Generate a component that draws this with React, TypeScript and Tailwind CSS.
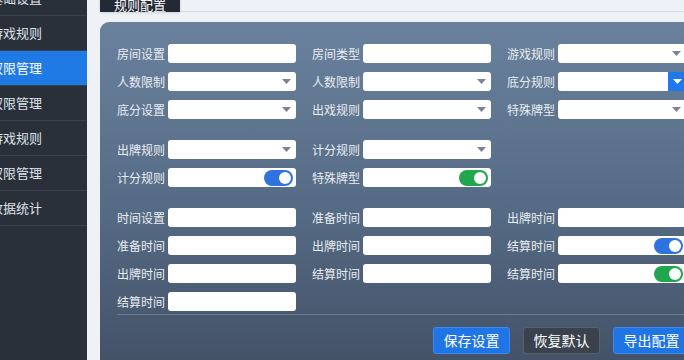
import React from 'react';

type Kind = 'text' | 'select' | 'selectBtn' | 'toggleBlue' | 'toggleGreen' | 'none';
type Field = { label: string; kind: Kind };

const SIDEBAR = ['基础设置', '游戏规则', '权限管理', '权限管理', '游戏规则', '权限管理', '数据统计'];

const SECTIONS: Field[][][] = [
  [
    [
      { label: '房间设置', kind: 'text' },
      { label: '房间类型', kind: 'text' },
      { label: '游戏规则', kind: 'select' },
    ],
    [
      { label: '人数限制', kind: 'select' },
      { label: '人数限制', kind: 'select' },
      { label: '底分规则', kind: 'selectBtn' },
    ],
    [
      { label: '底分设置', kind: 'select' },
      { label: '出戏规则', kind: 'select' },
      { label: '特殊牌型', kind: 'select' },
    ],
  ],
  [
    [
      { label: '出牌规则', kind: 'select' },
      { label: '计分规则', kind: 'select' },
      { label: '', kind: 'none' },
    ],
    [
      { label: '计分规则', kind: 'toggleBlue' },
      { label: '特殊牌型', kind: 'toggleGreen' },
      { label: '', kind: 'none' },
    ],
  ],
  [
    [
      { label: '时间设置', kind: 'text' },
      { label: '准备时间', kind: 'text' },
      { label: '出牌时间', kind: 'text' },
    ],
    [
      { label: '准备时间', kind: 'text' },
      { label: '出牌时间', kind: 'text' },
      { label: '结算时间', kind: 'toggleBlue' },
    ],
    [
      { label: '出牌时间', kind: 'text' },
      { label: '结算时间', kind: 'text' },
      { label: '结算时间', kind: 'toggleGreen' },
    ],
    [
      { label: '结算时间', kind: 'text' },
      { label: '', kind: 'none' },
      { label: '', kind: 'none' },
    ],
  ],
];

function Caret({ className }: { className: string }) {
  return (
    <svg width="9" height="5" viewBox="0 0 9 5" className={className}>
      <path d="M0 0h9L4.5 5z" fill="currentColor" />
    </svg>
  );
}

function Control({ kind }: { kind: Kind }) {
  // Toggle inside a white box
  if (kind === 'toggleBlue' || kind === 'toggleGreen') {
    const bg = kind === 'toggleBlue' ? 'bg-[#2f73df]' : 'bg-[#20a64c]';
    return (
      <div className="w-[128px] h-[19px] bg-white rounded-[3px] flex items-center justify-end pr-[3px]">
        <div className={`w-[29px] h-[16px] rounded-full ${bg} flex items-center justify-end pr-[2px]`}>
          <div className="w-[12px] h-[12px] rounded-full bg-white" />
        </div>
      </div>
    );
  }
  if (kind === 'select') {
    return (
      <div className="w-[128px] h-[19px] bg-white rounded-[3px] flex items-center justify-end pr-[5px]">
        <Caret className="text-[#7b8490]" />
      </div>
    );
  }
  if (kind === 'selectBtn') {
    return (
      <div className="w-[128px] h-[19px] bg-white rounded-[3px] flex justify-end overflow-hidden">
        <div className="w-[18px] h-full bg-[#1f78ee] flex items-center justify-center">
          <Caret className="text-white" />
        </div>
      </div>
    );
  }
  return <div className="w-[128px] h-[19px] bg-white rounded-[3px]" />;
}

export default function App() {
  return (
    <div
      className="w-[684px] h-[360px] overflow-hidden flex bg-[#eef1f5]"
      style={{ fontFamily: '"Noto Sans CJK SC", "Noto Sans", sans-serif' }}
    >
      {/* sidebar */}
      <aside className="w-[87px] shrink-0 bg-[#29303a] overflow-hidden">
        <div className="-mt-[19px]">
          {SIDEBAR.map((item, i) => (
            <div
              key={i}
              className={`h-[35px] flex items-center border-b border-[#3a424e] text-[13px] whitespace-nowrap ${
                i === 2 ? 'bg-[#1f7ae6] text-white border-[#1f7ae6]' : 'text-[#dfe4ea]'
              }`}
            >
              <span className="-ml-[10px]">{item}</span>
            </div>
          ))}
        </div>
      </aside>

      {/* main */}
      <main className="flex-1 min-w-0 pl-[13px] overflow-hidden">
        <div className="h-[12px] border-b border-[#d6dbe2] flex items-end">
          <div className="w-[80px] h-[30px] -mt-[18px] bg-[#232a35] text-white text-[13px] flex items-end justify-center pb-[1px] leading-none self-start shadow">
            规则配置
          </div>
        </div>

        <div className="mt-[10px] w-[604px] h-[360px] rounded-[9px] bg-gradient-to-b from-[#6a819d] via-[#566c86] to-[#424f64] pt-[22px] pl-[17px] pr-[14px]">
          {SECTIONS.map((section, si) => (
            <div key={si} className={`flex flex-col gap-[9px] ${si > 0 ? 'mt-[21px]' : ''}`}>
              {section.map((row, ri) => (
                <div key={ri} className="flex gap-[16px]">
                  {row.map((f, fi) =>
                    f.kind === 'none' ? (
                      <div key={fi} className="w-[179px]" />
                    ) : (
                      <div key={fi} className="w-[179px] flex items-center">
                        <span className="w-[51px] text-[12px] text-[#e9edf2] leading-none whitespace-nowrap">
                          {f.label}
                        </span>
                        <Control kind={f.kind} />
                      </div>
                    ),
                  )}
                </div>
              ))}
            </div>
          ))}

          <div className="mt-[3px] border-t border-[#6a7d95]" />

          <div className="mt-[12px] flex justify-end gap-[13px]">
            <button className="w-[77px] h-[27px] rounded-[3px] bg-[#1f74e6] border border-[#3d8af0] text-white text-[14px]">
              保存设置
            </button>
            <button className="w-[77px] h-[27px] rounded-[3px] bg-[#3a424d] border border-[#59616c] text-white text-[14px]">
              恢复默认
            </button>
            <button className="w-[77px] h-[27px] rounded-[3px] bg-[#1f74e6] border border-[#3d8af0] text-white text-[14px]">
              导出配置
            </button>
          </div>
        </div>
      </main>
    </div>
  );
}
